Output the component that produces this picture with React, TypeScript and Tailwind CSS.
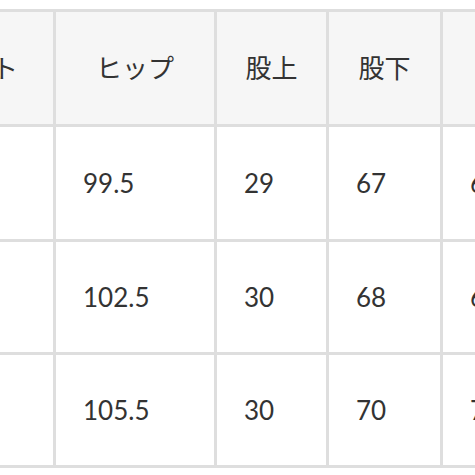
export default function App() {
  const headers = ["ウエスト", "ヒップ", "股上", "股下", "わたり"];
  const rows = [
    ["76", "99.5", "29", "67", "62"],
    ["79", "102.5", "30", "68", "64"],
    ["82", "105.5", "30", "70", "71"],
  ];
  return (
    <div
      className="w-[475px] h-[475px] overflow-hidden bg-white pt-[9px]"
      style={{ fontFamily: "Lato, 'Noto Sans CJK JP', sans-serif" }}
    >
      <div className="ml-[-124px] w-max grid grid-cols-[174px_158px_109px_111px_160px] grid-rows-[112px_112px_110px_110px] gap-[3px] p-[3px] bg-[#dedede] text-[26px] text-[#333]">
        {headers.map((h) => (
          <div key={h} className="bg-[#f6f6f6] flex items-center justify-center whitespace-nowrap">
            {h}
          </div>
        ))}
        {rows.map((r, i) =>
          r.map((c, j) => (
            <div key={`${i}-${j}`} className="bg-white flex items-center pl-[27px] whitespace-nowrap">
              {c}
            </div>
          ))
        )}
      </div>
    </div>
  );
}
